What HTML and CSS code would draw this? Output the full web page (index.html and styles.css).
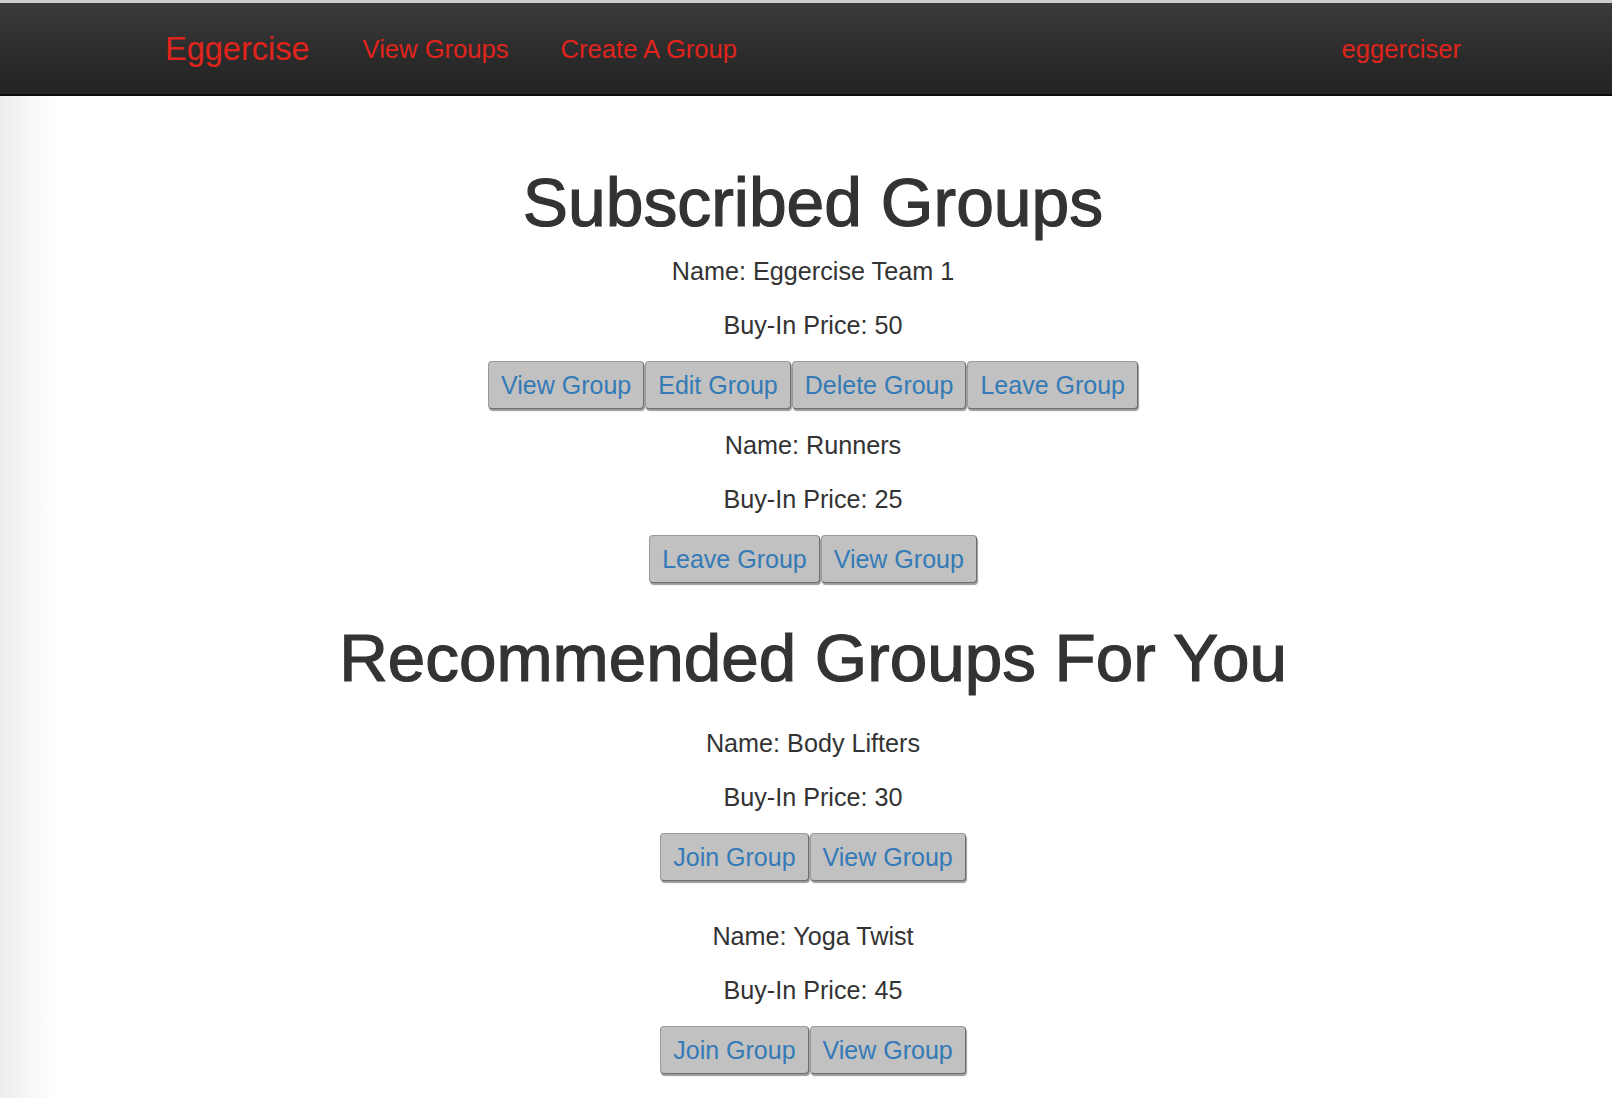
FILE: index.html
```html
<!DOCTYPE html>
<html>
<head>
<meta charset="utf-8">
<title>Eggercise</title>
<link rel="stylesheet" href="styles.css">
</head>
<body>
<div class="topband"></div>
<nav class="navbar">
  <div class="nav-inner">
    <a class="brand" href="#">Eggercise</a>
    <a class="nav-link" href="#">View Groups</a>
    <a class="nav-link" href="#">Create A Group</a>
    <a class="nav-link nav-right" href="#">eggerciser</a>
  </div>
</nav>
<main class="main">
  <h1 class="title">Subscribed Groups</h1>
  <div class="group">
    <p class="line">Name: Eggercise Team 1</p>
    <p class="line">Buy-In Price: 50</p>
    <div class="actions">
      <button class="btn">View Group</button>
      <button class="btn">Edit Group</button>
      <button class="btn">Delete Group</button>
      <button class="btn">Leave Group</button>
    </div>
  </div>
  <div class="group">
    <p class="line">Name: Runners</p>
    <p class="line">Buy-In Price: 25</p>
    <div class="actions">
      <button class="btn">Leave Group</button>
      <button class="btn">View Group</button>
    </div>
  </div>
  <h1 class="title title-rec">Recommended Groups For You</h1>
  <div class="group group-rec">
    <p class="line">Name: Body Lifters</p>
    <p class="line">Buy-In Price: 30</p>
    <div class="actions">
      <button class="btn">Join Group</button>
      <button class="btn">View Group</button>
    </div>
  </div>
  <div class="group group-rec">
    <p class="line">Name: Yoga Twist</p>
    <p class="line">Buy-In Price: 45</p>
    <div class="actions">
      <button class="btn">Join Group</button>
      <button class="btn">View Group</button>
    </div>
  </div>
</main>
</body>
</html>
```
FILE: styles.css
```css
html, body {
  margin: 0;
  padding: 0;
}
body {
  font-family: "Liberation Sans", Arial, Helvetica, sans-serif;
  color: #333;
  background: linear-gradient(to right, #ececec 0px, #f7f7f7 30px, #ffffff 60px) fixed;
  min-height: 1098px;
}
.topband {
  height: 3px;
  background: #cfcfcf;
}
.navbar {
  height: 91px;
  border-bottom: 2px solid #0a0a0a;
  background: linear-gradient(to bottom, #3b3b3b 0%, #2d2d2d 50%, #232323 100%);
  padding-left: 14px;
}
.nav-inner {
  width: 1296px;
  height: 100%;
  margin: 0 auto;
  display: flex;
  align-items: center;
  padding-top: 2px;
  box-sizing: border-box;
}
.nav-inner a {
  color: #e0241b;
  text-decoration: none;
}
.brand {
  font-size: 32.5px;
  margin-right: 27px;
}
.nav-link {
  font-size: 25.6px;
  padding: 0 26px;
}
.nav-right {
  margin-left: auto;
  padding-right: 0;
}
.main {
  padding-left: 14px;
  text-align: center;
  padding-top: 70px;
}
.title {
  font-size: 67.8px;
  font-weight: 500;
  line-height: 74px;
  margin: 0 0 13px;
  color: #333;
  -webkit-text-stroke: 1.2px #333;
}
.title-rec {
  font-size: 67.4px;
  margin-top: 38px;
  margin-bottom: 30px;
}
.line {
  font-size: 25.2px;
  line-height: 36px;
  margin: 0 0 18px;
}
.group {
  margin-bottom: 18px;
}
.group-rec {
  margin-bottom: 37px;
}
.actions {
  display: flex;
  justify-content: center;
  gap: 1px;
}
.btn {
  font-family: "Liberation Sans", Arial, Helvetica, sans-serif;
  font-size: 25px;
  line-height: 36px;
  padding: 5px 12px;
  border: 1px solid #9a9a9a;
  border-right-color: #6e6e6e;
  border-bottom-color: #6e6e6e;
  border-radius: 4px;
  background: #c1c1c1;
  color: #337ab7;
  box-shadow: 1px 2px 1px rgba(0, 0, 0, 0.4);
  margin: 0;
}
```
